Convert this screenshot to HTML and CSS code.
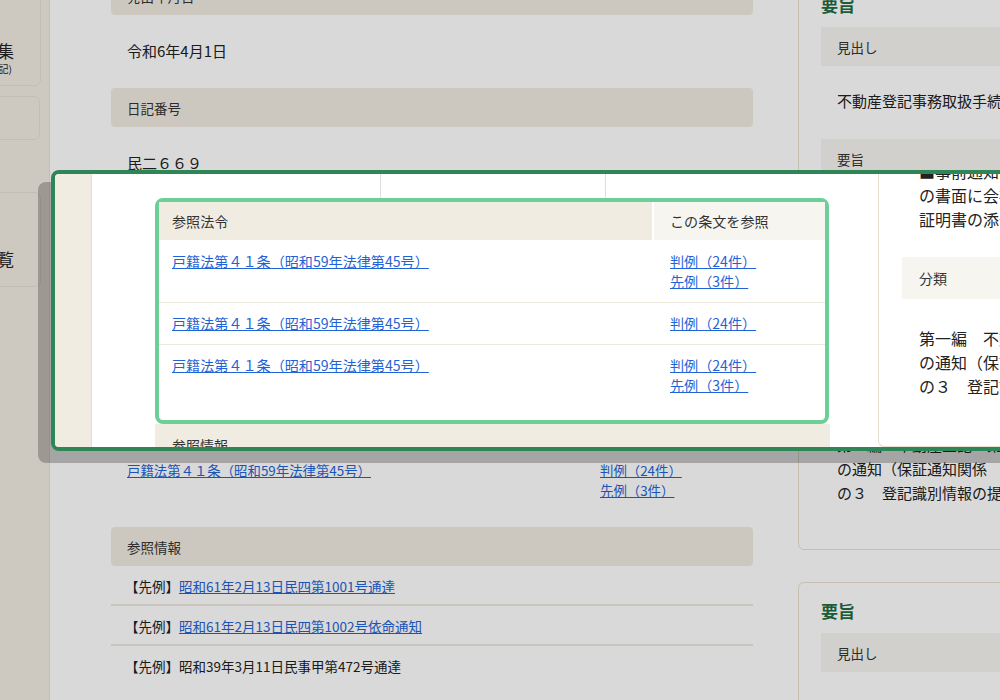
FILE: index.html
```html
<!DOCTYPE html>
<html lang="ja">
<head>
    <meta charset="UTF-8">
    <meta name="viewport" content="width=device-width, initial-scale=1.0">
    <title>先例詳細</title>
    <link rel="stylesheet" href="styles.css">
</head>
<body>
    <div class="layout">
        <nav class="side">
            <a class="side-card side-card-a">判例集<span class="side-sub">(登記)</span></a>
            <a class="side-card side-card-b"></a>
            <a class="side-card side-card-c">先例一覧</a>
        </nav>

        <main class="content">
            <div class="label label-first">発出年月日</div>
            <div class="value">令和6年4月1日</div>
            <div class="label">日記番号</div>
            <div class="value">民二６６９</div>

            <div class="grid3">
                <div class="label">発出機関</div>
                <div class="label">宛先</div>
                <div class="label">種別</div>
                <div class="value">法務省民事局長</div>
                <div class="value">法務局長</div>
                <div class="value">通達</div>
            </div>

            <div class="law-table">
                <div class="law-head">
                    <div class="law-head-cell">参照法令</div>
                    <div class="law-head-cell law-head-side">この条文を参照</div>
                </div>
                <div class="law-row">
                    <div class="law-cell"><a href="#">戸籍法第４１条（昭和59年法律第45号）</a></div>
                    <div class="law-cell law-side"><a href="#">判例（24件）</a><a href="#">先例（3件）</a></div>
                </div>
                <div class="law-row">
                    <div class="law-cell"><a href="#">戸籍法第４１条（昭和59年法律第45号）</a></div>
                    <div class="law-cell law-side"><a href="#">判例（24件）</a></div>
                </div>
                <div class="law-row law-row-last">
                    <div class="law-cell"><a href="#">戸籍法第４１条（昭和59年法律第45号）</a></div>
                    <div class="law-cell law-side"><a href="#">判例（24件）</a><a href="#">先例（3件）</a></div>
                </div>
            </div>

            <div class="label">参照情報</div>
            <ul class="refs">
                <li>【先例】<a href="#">昭和61年2月13日民四第1001号通達</a></li>
                <li>【先例】<a href="#">昭和61年2月13日民四第1002号依命通知</a></li>
                <li>【先例】昭和39年3月11日民事甲第472号通達</li>
            </ul>
        </main>

        <aside class="aside">
            <section class="card card-first">
                <h2 class="card-title">要旨</h2>
                <div class="abar">見出し</div>
                <div class="aval">不動産登記事務取扱手続準則の一部改正について</div>
                <div class="abar">要旨</div>
                <div class="aval">
                    不動産登記事務取扱手続準則の一部が改正され、令和６年４月１日<br>
                    から施行されることとなった。主な改正点は次のとおり。<br>
                    ■登記識別情報の提供がない場合の本人確認情報の取扱い<br>
                    ■事前通知書の様式の変更及び申請人が提出する申出書その他<br>
                    の書面に会社法人等番号を記載した場合における印鑑<br>
                    証明書の添付の省略
                </div>
                <div class="abar">分類</div>
                <div class="aval">
                    第一編　不動産登記　第二章　登記手続　第三節　登記識別情報<br>
                    の通知（保証通知関係　事前通知等）<br>
                    の３　登記識別情報の提供がない場合の手続
                </div>
            </section>
            <section class="card">
                <h2 class="card-title">要旨</h2>
                <div class="abar">見出し</div>
                <div class="aval">登記識別情報の提供がない場合の事前通知について</div>
            </section>
        </aside>
    </div>

    <div class="dim"></div>

    <!-- highlighted part of the page -->
    <div class="lens">
        <div class="zside"></div>
        <div class="zmain">
            <div class="zstubs">
                <div></div>
                <div></div>
                <div></div>
            </div>
            <div class="ztable">
                <div class="zhead">
                    <div class="zhead-cell">参照法令</div>
                    <div class="zhead-cell zhead-side">この条文を参照</div>
                </div>
                <div class="zrow">
                    <div class="zcell"><a href="#">戸籍法第４１条（昭和59年法律第45号）</a></div>
                    <div class="zcell zside-cell"><a href="#">判例（24件）</a><a href="#">先例（3件）</a></div>
                </div>
                <div class="zrow">
                    <div class="zcell"><a href="#">戸籍法第４１条（昭和59年法律第45号）</a></div>
                    <div class="zcell zside-cell"><a href="#">判例（24件）</a></div>
                </div>
                <div class="zrow zrow-last">
                    <div class="zcell"><a href="#">戸籍法第４１条（昭和59年法律第45号）</a></div>
                    <div class="zcell zside-cell"><a href="#">判例（24件）</a><a href="#">先例（3件）</a></div>
                </div>
            </div>
            <div class="zinfo">参照情報</div>
        </div>
        <div class="zaside">
            <div class="zval zval-top">
                不動産登記事務取扱手続準則の一部が改正され、令和６年４月１日<br>
                から施行されることとなった。主な改正点は次のとおり。<br>
                ■登記識別情報の提供がない場合の本人確認情報の取扱い<br>
                ■事前通知書の様式の変更及び申請人が提出する申出書その他<br>
                の書面に会社法人等番号を記載した場合における印鑑<br>
                証明書の添付の省略
            </div>
            <div class="zbar">分類</div>
            <div class="zval zval-bottom">
                第一編　不動産登記　第二章　登記手続　第三節<br>
                の通知（保証通知関係　事前通知等）<br>
                の３　登記識別情報の提供がない場合の手続
            </div>
        </div>
    </div>
</body>
</html>
```

FILE: styles.css
```css
body {
    margin: 0;
    width: 1000px;
    height: 700px;
    overflow: hidden;
    position: relative;
    background: #fff;
    color: #222;
    font-family: "Noto Sans CJK JP", "Noto Sans", sans-serif;
}
a {
    color: #1f63d6;
}
.layout {
    display: flex;
    align-items: flex-start;
}

/* sidebar */
.side {
    flex: none;
    width: 49px;
    height: 700px;
    background: #f1ede3;
    border-right: 1px solid #e6e1d6;
}
.side-card {
    display: block;
    box-sizing: border-box;
    width: 101px;
    margin-left: -60px;
    padding-right: 26px;
    text-align: right;
    border: 1px solid #e6e0d4;
    border-radius: 6px;
    color: #222;
    font-size: 17px;
    line-height: 24px;
}
.side-card-a {
    margin-top: -20px;
    height: 106px;
    padding-top: 58px;
}
.side-sub {
    display: block;
    font-size: 10px;
    line-height: 12px;
    padding-right: 2px;
}
.side-card-b {
    margin-top: 10px;
    height: 44px;
    width: 100px;
}
.side-card-c {
    margin-top: 52px;
    height: 95px;
    padding-top: 54px;
}

/* main column */
.content {
    flex: none;
    width: 642px;
    margin-left: 61px;
}
.label {
    display: flex;
    align-items: center;
    height: 39px;
    padding: 0 16px;
    background: #f0ece2;
    border-radius: 4px;
    font-size: 13.5px;
    color: #333;
}
.label-first {
    margin-top: -24px;
}
.value {
    padding: 24px 16px 25px;
    font-size: 15px;
    line-height: 24px;
}
.grid3 {
    display: grid;
    grid-template-columns: 214px 214px 214px;
}
.grid3 .label {
    border-radius: 0;
}
.grid3 .value {
    padding-bottom: 24px;
}

.law-table {
    font-size: 13.4px;
}
.law-head {
    display: grid;
    grid-template-columns: 471px 169px;
    gap: 2px;
    height: 37px;
}
.law-head-cell {
    display: flex;
    align-items: center;
    padding-left: 12px;
    background: #f0ece2;
    color: #333;
}
.law-head-side {
    background: #f6f5f0;
    padding-left: 16px;
}
.law-row {
    display: grid;
    grid-template-columns: 473px 169px;
    border-bottom: 1px solid #efeae0;
    line-height: 20px;
}
.law-row-last {
    border-bottom: none;
}
.law-cell {
    padding: 10px 0 10px 16px;
}
.law-row-last .law-cell {
    padding-bottom: 27px;
}
.law-side {
    padding-left: 16px;
}
.law-side a {
    display: block;
    width: max-content;
}

.refs {
    list-style: none;
    margin: 0;
    padding: 0;
    font-size: 13.5px;
}
.refs li {
    padding: 9px 14px 7px;
    line-height: 22px;
    border-bottom: 2px solid #eee9df;
}
.refs li:last-child {
    border-bottom: none;
}

/* right column */
.aside {
    flex: none;
    width: 420px;
    margin-left: 45px;
}
.card {
    border: 1px solid #e8e1cf;
    border-radius: 6px;
    padding: 16px 0 18px 22px;
    margin-top: 32px;
}
.card-first {
    margin-top: -24px;
}
.card-title {
    margin: 0 0 10px;
    font-size: 17px;
    line-height: 24px;
    color: #236b41;
}
.abar {
    display: flex;
    align-items: center;
    height: 39px;
    padding: 0 16px;
    background: #f6f5f0;
    font-size: 13.5px;
    color: #333;
}
.aval {
    padding: 23px 16px 26px;
    font-size: 15px;
    line-height: 24px;
    white-space: nowrap;
}

/* dimmed page */
.dim {
    position: absolute;
    inset: 0;
    background: rgba(0, 0, 0, 0.15);
}

/* highlighted callout */
.lens {
    position: absolute;
    left: 51px;
    top: 170px;
    box-sizing: border-box;
    width: 1000px;
    height: 281px;
    display: flex;
    border: 4px solid #2e8555;
    border-radius: 8px;
    background: #fff;
    overflow: hidden;
    box-shadow: -13px 12px 0 rgba(0, 0, 0, 0.24);
}
.zside {
    flex: none;
    width: 36px;
    background: #f0ece2;
    border-right: 1px solid #e3ded3;
}
.zmain {
    flex: none;
    box-sizing: border-box;
    width: 786px;
    padding: 0 49px 0 63px;
}
.zstubs {
    display: grid;
    grid-template-columns: 225px 225px 1fr;
    height: 24px;
}
.zstubs div + div {
    border-left: 1px solid #dedede;
}
.ztable {
    border: 4px solid #6dcf98;
    border-radius: 8px;
    font-size: 14.1px;
}
.zhead {
    display: grid;
    grid-template-columns: 493px 171px;
    gap: 2px;
    height: 38px;
}
.zhead-cell {
    display: flex;
    align-items: center;
    padding-left: 13px;
    background: #f0ece2;
    color: #333;
}
.zhead-side {
    background: #f6f5f0;
    padding-left: 16px;
}
.zrow {
    display: grid;
    grid-template-columns: 495px 171px;
    border-bottom: 1px solid #efeae0;
    line-height: 20px;
}
.zrow:nth-child(2) .zcell {
    padding-top: 11px;
}
.zrow-last {
    border-bottom: none;
}
.zcell {
    padding: 10px 0 11px 13px;
}
.zrow-last .zcell {
    padding-bottom: 25px;
}
.zside-cell {
    padding-left: 16px;
}
.zside-cell a {
    display: block;
    width: max-content;
}
.zinfo {
    display: flex;
    align-items: center;
    height: 41px;
    margin-right: -1px;
    padding-left: 17px;
    background: #f0ece2;
    font-size: 14px;
    color: #333;
}
.zaside {
    flex: 1;
    height: 272px;
    padding-left: 23px;
    overflow: hidden;
    border-left: 1px solid #e6dfcd;
    border-bottom: 1px solid #e6dfcd;
    border-bottom-left-radius: 6px;
}
.zval {
    padding: 0 17px;
    font-size: 16px;
    line-height: 24px;
    white-space: nowrap;
}
.zval-top {
    margin-top: -87px;
    padding-bottom: 26px;
}
.zval-bottom {
    padding-top: 27px;
}
.zbar {
    display: flex;
    align-items: center;
    height: 42px;
    padding-left: 17px;
    background: #f6f5f0;
    font-size: 14px;
    color: #333;
}
```
